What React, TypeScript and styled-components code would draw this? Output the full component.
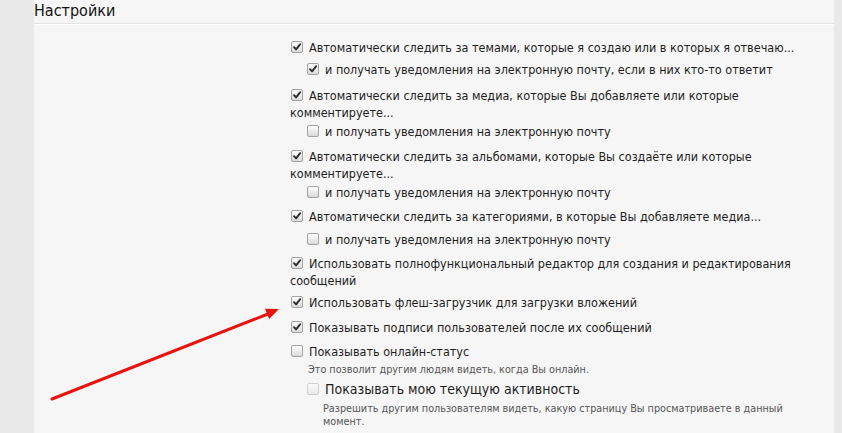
import React from "react";
import styled, { createGlobalStyle } from "styled-components";

const Global = createGlobalStyle`
  html, body { margin: 0; padding: 0; background: #e9e9e9; }
  body { font-family: "DejaVu Sans Condensed", "DejaVu Sans", sans-serif; }
`;

const Page = styled.div`
  position: relative;
  width: 842px;
  height: 433px;
  overflow: hidden;
  display: grid;
  grid-template-columns: 34px 800px 8px;
  background: #e9e9e9;
`;

const Panel = styled.section`
  grid-column: 2;
  background: #f6f6f6;
  display: flex;
  flex-direction: column;
`;

const Header = styled.header`
  height: 23px;
  border-bottom: 1px solid #e3e3e3;
  box-shadow: 0 1px 0 #ffffff;
  font-size: 16px;
  line-height: 22px;
  color: #111;
`;

const Body = styled.div`
  padding: 15px 0 0 256px;
  width: 530px;
`;

const Row = styled.div<{ $mt: number; $nested?: boolean; $big?: boolean }>`
  margin-top: ${(p) => p.$mt}px;
  margin-left: ${(p) => (p.$nested ? 16 : 0)}px;
  font-size: ${(p) => (p.$big ? 14 : 12.5)}px;
  line-height: 17px;
  color: #1e1e1e;
`;

const Box = styled.span<{ $disabled?: boolean }>`
  display: inline-block;
  box-sizing: border-box;
  width: 12px;
  height: 12px;
  margin: 0 6px 0 1px;
  vertical-align: -1px;
  border: 1px solid ${(p) => (p.$disabled ? "#cfcfcf" : "#a3a3a3")};
  border-radius: 2px;
  background: ${(p) =>
    p.$disabled
      ? "linear-gradient(#fafafa, #e9e9e9)"
      : "linear-gradient(#ffffff, #d9d9d9)"};
  position: relative;
`;

const Tick = styled.svg`
  position: absolute;
  left: 0;
  top: 0;
`;

const Desc = styled.div<{ $mt: number; $indent: number }>`
  margin-top: ${(p) => p.$mt}px;
  margin-left: ${(p) => p.$indent}px;
  font-size: 10.75px;
  line-height: 13px;
  color: #555;
`;

const Arrow = styled.svg`
  position: absolute;
  left: 0;
  top: 0;
  pointer-events: none;
`;

type Item =
  | { kind: "row"; text: string; checked: boolean; mt: number; nested?: boolean; big?: boolean; disabled?: boolean }
  | { kind: "desc"; text: string; mt: number; indent: number };

const items: Item[] = [
  { kind: "row", mt: 0, checked: true, text: "Автоматически следить за темами, которые я создаю или в которых я отвечаю..." },
  { kind: "row", mt: 5, checked: true, nested: true, text: "и получать уведомления на электронную почту, если в них кто-то ответит" },
  { kind: "row", mt: 9, checked: true, text: "Автоматически следить за медиа, которые Вы добавляете или которые комментируете..." },
  { kind: "row", mt: 2, checked: false, nested: true, text: "и получать уведомления на электронную почту" },
  { kind: "row", mt: 8, checked: true, text: "Автоматически следить за альбомами, которые Вы создаёте или которые комментируете..." },
  { kind: "row", mt: 2, checked: false, nested: true, text: "и получать уведомления на электронную почту" },
  { kind: "row", mt: 7, checked: true, text: "Автоматически следить за категориями, в которые Вы добавляете медиа..." },
  { kind: "row", mt: 6, checked: false, nested: true, text: "и получать уведомления на электронную почту" },
  { kind: "row", mt: 7, checked: true, text: "Использовать полнофункциональный редактор для создания и редактирования сообщений" },
  { kind: "row", mt: 5, checked: true, text: "Использовать флеш-загрузчик для загрузки вложений" },
  { kind: "row", mt: 8, checked: true, text: "Показывать подписи пользователей после их сообщений" },
  { kind: "row", mt: 7, checked: false, text: "Показывать онлайн-статус" },
  { kind: "desc", mt: 3, indent: 18, text: "Это позволит другим людям видеть, когда Вы онлайн." },
  { kind: "row", mt: 5, checked: false, nested: true, big: true, disabled: true, text: "Показывать мою текущую активность" },
  { kind: "desc", mt: 4, indent: 33, text: "Разрешить другим пользователям видеть, какую страницу Вы просматриваете в данный момент." },
];

function Checkbox({ checked, disabled }: { checked: boolean; disabled?: boolean }) {
  return (
    <Box $disabled={disabled}>
      {checked && (
        <Tick width="10" height="10" viewBox="0 0 10 10">
          <path d="M2 5.2 L4.1 7.3 L8.2 2.2" fill="none" stroke="#2b2b2b" strokeWidth="1.9" strokeLinecap="round" strokeLinejoin="round" />
        </Tick>
      )}
    </Box>
  );
}

export default function App() {
  return (
    <>
      <Global />
      <Page>
        <Panel>
          <Header>Настройки</Header>
          <Body>
            {items.map((it, i) =>
              it.kind === "row" ? (
                <Row key={i} $mt={it.mt} $nested={it.nested} $big={it.big}>
                  <Checkbox checked={it.checked} disabled={it.disabled} />
                  {it.text}
                </Row>
              ) : (
                <Desc key={i} $mt={it.mt} $indent={it.indent}>
                  {it.text}
                </Desc>
              )
            )}
          </Body>
        </Panel>
        <Arrow width="842" height="433" viewBox="0 0 842 433">
          <line x1="52" y1="399" x2="268" y2="314" stroke="#e8120f" strokeWidth="3" strokeLinecap="round" />
          <polygon points="279,309 269.2,319 265,308.8" fill="#e8120f" />
        </Arrow>
      </Page>
    </>
  );
}
